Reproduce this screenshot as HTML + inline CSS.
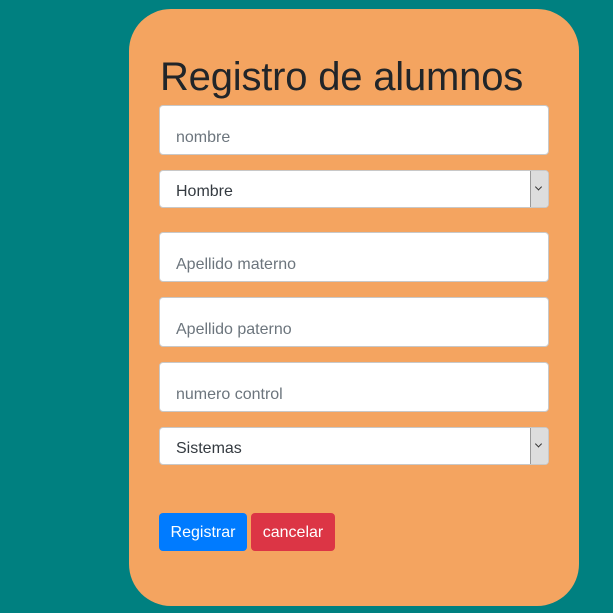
<!DOCTYPE html>
<html><head><style>
body{margin:0;width:613px;height:613px;background:#008080;position:relative;overflow:hidden;font-family:"Liberation Sans",sans-serif;}
.card{position:absolute;left:129px;top:9px;width:450px;height:597px;background:#f4a460;border-radius:42px;}
h1{position:absolute;left:160px;top:55px;margin:0;font-weight:400;font-size:40px;color:#212529;letter-spacing:-0.2px;}
.f{position:absolute;left:159px;width:388px;background:#fff;border:1px solid #c8c8c8;border-radius:4px;font-size:16px;}
.f span{position:absolute;left:16px;}
.ph{color:#6c757d;}
.sel{color:#343a40;}
.arr{position:absolute;right:0;top:0;bottom:0;width:17px;background:#ddd;border-left:1px solid #999;border-radius:0 3px 3px 0;}
.arr:after{content:"";position:absolute;left:5px;top:45%;width:4px;height:4px;border-right:1px solid #333;border-bottom:1px solid #333;transform:translateY(-50%) rotate(45deg);}
.b{position:absolute;top:513px;height:38px;line-height:40px;color:#fff;font-size:16px;border-radius:4px;text-align:center;}
</style></head><body>
<div class="card"></div>
<h1>Registro de alumnos</h1>
<div class="f" style="top:105px;height:48px"><span class="ph" style="top:23px">nombre</span></div>
<div class="f" style="top:170px;height:36px"><span class="sel" style="top:12px">Hombre</span><div class="arr"></div></div>
<div class="f" style="top:232px;height:48px"><span class="ph" style="top:23px">Apellido materno</span></div>
<div class="f" style="top:297px;height:48px"><span class="ph" style="top:23px">Apellido paterno</span></div>
<div class="f" style="top:362px;height:48px"><span class="ph" style="top:23px">numero control</span></div>
<div class="f" style="top:427px;height:36px"><span class="sel" style="top:12px">Sistemas</span><div class="arr"></div></div>
<div class="b" style="left:159px;width:88px;background:#007bff">Registrar</div>
<div class="b" style="left:251px;width:84px;background:#dc3545">cancelar</div>
</body></html>
